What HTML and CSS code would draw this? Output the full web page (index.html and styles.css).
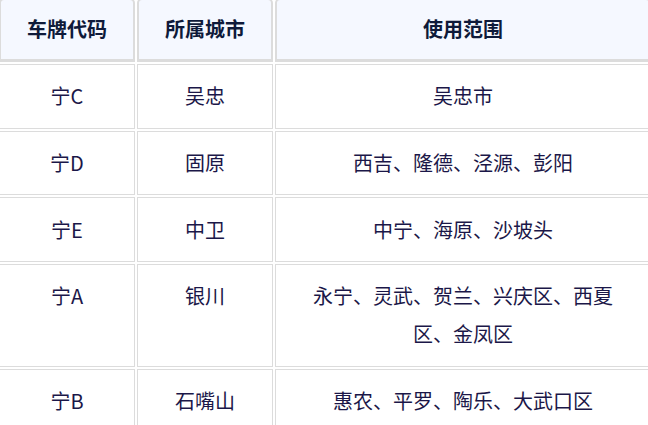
FILE: index.html
```html
<!DOCTYPE html>
<html lang="zh-CN">
<head>
<meta charset="utf-8">
<title>宁夏车牌代码</title>
<link rel="stylesheet" href="styles.css">
</head>
<body>
<div class="wrap">
  <table class="plates">
    <thead>
      <tr>
        <th class="c1">车牌代码</th>
        <th class="c2">所属城市</th>
        <th class="c3">使用范围</th>
      </tr>
    </thead>
    <tbody>
      <tr><td>宁C</td><td>吴忠</td><td>吴忠市</td></tr>
      <tr><td>宁D</td><td>固原</td><td>西吉、隆德、泾源、彭阳</td></tr>
      <tr><td>宁E</td><td>中卫</td><td>中宁、海原、沙坡头</td></tr>
      <tr class="top"><td>宁A</td><td>银川</td><td>永宁、灵武、贺兰、兴庆区、西夏区、金凤区</td></tr>
      <tr><td>宁B</td><td>石嘴山</td><td>惠农、平罗、陶乐、大武口区</td></tr>
    </tbody>
  </table>
</div>
</body>
</html>
```

FILE: styles.css
```css
html, body {
  margin: 0;
  padding: 0;
  background: #ffffff;
}

.wrap {
  width: 648px;
  height: 425px;
  overflow: hidden;
}

.plates {
  margin: -4px 0 0 -3px;
  width: 656px;
  border-collapse: separate;
  border-spacing: 2px;
  table-layout: fixed;
  font-family: "Noto Sans CJK SC", "Noto Sans", sans-serif;
  font-size: 20px;
  line-height: 38px;
  text-align: center;
}

.plates th,
.plates td {
  box-sizing: border-box;
}

.plates th {
  background: #f5f8ff;
  color: #0e1a3a;
  font-weight: 700;
  border: 2px solid #dcdcdc;
  border-bottom-width: 3px;
  border-radius: 5px 5px 0 0;
  padding: 10px 0 11px;
}

.plates .c1 { width: 136px; }
.plates .c2 { width: 136px; }
.plates .c3 { width: 376px; }

.plates td {
  background: #ffffff;
  color: #1b1748;
  border: 1px solid #dcdcdc;
  padding: 12.33px 30px;
  vertical-align: middle;
}

.plates tr.top td {
  vertical-align: top;
}
```
